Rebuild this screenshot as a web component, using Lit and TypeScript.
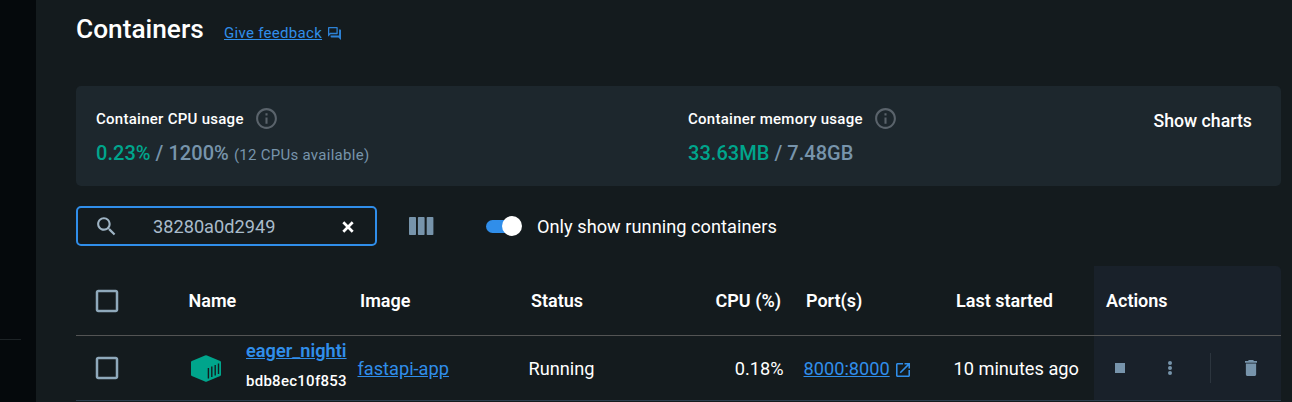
import { LitElement, html, css } from "lit";
import { customElement } from "lit/decorators.js";

const infoIcon = html`<svg class="info" viewBox="0 0 24 24" width="25" height="25"><path fill="#5a636b" d="M11 7h2v2h-2zm0 4h2v6h-2zm1-9C6.48 2 2 6.48 2 12s4.48 10 10 10 10-4.480 10-10S17.520 2 12 2zm0 18c-4.410 0-8-3.590-8-8s3.590-8 8-8 8 3.590 8 8-3.590 8-8 8z"/></svg>`;

const checkbox = html`<svg class="check" viewBox="0 0 24 24" width="30" height="30"><path fill="#8fa9bb" d="M19 5v14H5V5h14m0-2H5c-1.100 0-2 .9-2 2v14c0 1.100.9 2 2 2h14c1.100 0 2-.9 2-2V5c0-1.100-.9-2-2-2z"/></svg>`;

@customElement("app-root")
export class AppRoot extends LitElement {
  static styles = css`
    :host {
      display: flex;
      width: 1292px;
      height: 402px;
      overflow: hidden;
      background: #141b1e;
      color: #fff;
      font: 400 18.2px/24px Roboto, sans-serif;
    }
    * { box-sizing: border-box; }
    svg { display: block; flex: none; }
    a { color: #308eea; text-decoration: underline; }
    .side { width: 36px; flex: none; background: #05090c; padding-top: 339px; }
    .side-line { width: 21px; height: 1px; background: #1d2326; }
    .main { width: 1205px; margin-left: 40px; flex: none; }
    .head { height: 86px; display: flex; align-items: baseline; padding-top: 14px; }
    h1 { margin: 0; font-size: 26.25px; line-height: 31px; font-weight: 500; width: 148px; }
    .feedback { font-size: 15px; letter-spacing: 0.3px; line-height: 20px; }
    .chat { margin-left: 6px; align-self: flex-start; margin-top: 13px; opacity: 0.9; }
    .panel { height: 100px; border-radius: 5px; background: #1d272d; display: flex; padding: 0 20px; }
    .cpu { width: 592px; }
    .mem { width: 465.5px; }
    .label { display: flex; align-items: center; font-size: 15px; font-weight: 500; height: 25px; margin-top: 20px; letter-spacing: 0.27px; }
    .info { margin-left: 10.500px; }
    .value { font-size: 20px; font-weight: 500; margin-top: 10px; color: #7794ab; line-height: 24px; white-space: nowrap; letter-spacing: 0.04px; }
    .used { color: #00a58c; }
    .avail { font-size: 15px; font-weight: 400; letter-spacing: 0.28px; }
    .charts { font-weight: 500; font-size: 17.7px; margin-top: 23px; white-space: nowrap; }
    .tools { height: 40px; margin-top: 20px; display: flex; align-items: center; }
    .search { width: 301px; height: 40px; border: 2px solid #308eea; border-radius: 5px; display: flex; align-items: center; padding-left: 16px; color: #a9bccb; }
    .term { width: 189px; margin-left: 34px; padding-top: 1px; }
    .clear { margin-top: 1px; }
    .cols { margin-left: 32px; }
    .switch { margin-left: 52px; width: 36px; height: 20px; display: flex; align-items: center; }
    .track { width: 32px; height: 13px; border-radius: 7px; background: #308eea; display: flex; align-items: center; }
    .thumb { width: 20px; height: 20px; border-radius: 50%; background: #fff; margin-left: 16px; flex: none; }
    .only { margin-left: 15px; white-space: nowrap; padding-top: 1px; letter-spacing: 0.03px; }
    .table { margin-top: 20px; }
    .row { display: grid; white-space: nowrap; }
    .row > * { display: flex; align-items: center; min-width: 0; }
    .hrow { grid-template-columns: 112.500px 171.500px 171px 250px 25px 150px 138px 187px; height: 70px; border-bottom: 1px solid #535454; font-weight: 600; font-size: 18px; }
    .drow { grid-template-columns: 113px 168.500px 171px 255px 20px 150px 140.500px 187px; height: 65px; border-bottom: 1px solid #2b3d4c; }
    .check { margin-left: 16px; }
    .count { display: flex; justify-content: space-between; }
    .acts { background: #19212a; }
    .hrow .acts { border-top-right-radius: 5px; padding-left: 12px; }
    .box { margin-left: 2px; }
    .names { display: flex; flex-direction: column; margin-left: 25px; margin-bottom: 4px; width: 102px; flex: none; overflow: hidden; }
    .name { font-weight: 600; line-height: 30px; }
    .id { font-size: 15px; line-height: 30px; font-weight: 500; letter-spacing: 0.27px; }
    .cell { padding-top: 1px; }
    .ext { margin-left: 6px; margin-top: 3px; }
    .stop { width: 10px; height: 10px; background: #7794ab; margin-left: 21px; }
    .dots { margin-left: 43px; }
    .sep { width: 1px; height: 30px; background: #2c353e; margin-left: 38px; }
    .bin { margin-left: 34px; }
  `;

  render() {
    return html`
      <div class="side"><div class="side-line"></div></div>
      <div class="main">
        <div class="head">
          <h1>Containers</h1>
          <a class="feedback">Give feedback</a>
          <svg class="chat" viewBox="2 2 20 20" width="13" height="13"><path fill="#308eea" d="M15 4v7H5.170L4 12.170V4h11m1-2H3c-.55 0-1 .45-1 1v14l4-4h10c.55 0 1-.45 1-1V3c0-.55-.45-1-1-1zm5 4h-2v9H6v2c0 .55.45 1 1 1h11l4 4V7c0-.55-.45-1-1-1z"/></svg>
        </div>
        <div class="panel">
          <div class="cpu">
            <div class="label">Container CPU usage${infoIcon}</div>
            <div class="value"><span class="used">0.23%</span> / 1200% <span class="avail">(12 CPUs available)</span></div>
          </div>
          <div class="mem">
            <div class="label">Container memory usage${infoIcon}</div>
            <div class="value"><span class="used">33.63MB</span> / 7.48GB</div>
          </div>
          <div class="charts">Show charts</div>
        </div>
        <div class="tools">
          <div class="search">
            <svg viewBox="0 0 24 24" width="25" height="25"><path fill="#9fb4c4" d="M15.500 14h-.79l-.28-.27C15.410 12.590 16 11.110 16 9.500 16 5.910 13.090 3 9.500 3S3 5.910 3 9.500 5.910 16 9.500 16c1.610 0 3.090-.59 4.230-1.570l.27.28v.79l5 4.990L20.490 19l-4.990-5zm-6 0C7.010 14 5 11.990 5 9.500S7.010 5 9.500 5 14 7.010 14 9.500 11.990 14 9.500 14z"/></svg>
            <span class="term">38280a0d2949</span>
            <svg class="clear" viewBox="0 0 12 12" width="12" height="12"><path d="M1.300 1.300l9.400 9.400M10.700 1.300l-9.400 9.400" stroke="#fff" stroke-width="2.700"/></svg>
          </div>
          <svg class="cols" viewBox="0 0 25 18" width="25" height="18"><g fill="#7794ab"><rect width="7" height="18" x="0" rx=".8"/><rect width="6.700" height="18" x="8.900" rx=".8"/><rect width="6.700" height="18" x="17.700" rx=".8"/></g></svg>
          <div class="switch"><div class="track"><div class="thumb"></div></div></div>
          <span class="only">Only show running containers</span>
        </div>
        <div class="table">
          <div class="row hrow">
            <div>${checkbox}</div><div>Name</div><div>Image</div>
            <div class="count"><span>Status</span><span>CPU (%)</span></div>
            <div></div><div>Port(s)</div><div>Last started</div><div class="acts">Actions</div>
          </div>
          <div class="row drow">
            <div>${checkbox}</div>
            <div>
              <svg class="box" viewBox="0 0 30 27" width="30" height="27"><path fill="#00a58c" d="M14 .6Q15 .1 16 .6L29.200 6.100Q30 6.500 30 7.300V19.800Q30 20.600 29.200 21L16 26.400Q15 26.900 14 26.400L.8 21Q0 20.600 0 19.800V7.300Q0 6.500.8 6.100z"/><path d="M17.400 13v10.600M20.800 11.500v10.600M24.200 10v10.600M27.500 8.500v10.600" stroke="#141b1e" stroke-width="1.400"/></svg>
              <div class="names"><a class="name">eager_nighti</a><span class="id">bdb8ec10f853</span></div>
            </div>
            <div class="cell"><a>fastapi-app</a></div>
            <div class="cell count"><span>Running</span><span>0.18%</span></div>
            <div></div>
            <div class="cell"><a>8000:8000</a><svg class="ext" viewBox="3 3 18 18" width="14" height="14"><path fill="#308eea" d="M19 19H5V5h7V3H5c-1.110 0-2 .9-2 2v14c0 1.100.89 2 2 2h14c1.100 0 2-.9 2-2v-7h-2v7zM14 3v2h3.590l-9.830 9.830 1.410 1.410L19 6.410V10h2V3h-7z"/></svg></div>
            <div class="cell">10 minutes ago</div>
            <div class="acts">
              <span class="stop"></span>
              <svg class="dots" viewBox="0 0 4 14" width="4" height="14"><g fill="#7794ab"><circle cx="2" cy="2" r="2"/><circle cx="2" cy="7" r="2"/><circle cx="2" cy="12" r="2"/></g></svg>
              <span class="sep"></span>
              <svg class="bin" viewBox="5 3 14 18" width="12" height="16" preserveAspectRatio="none"><path fill="#7794ab" d="M6 19c0 1.100.9 2 2 2h8c1.100 0 2-.9 2-2V7H6v12zM19 4h-3.500l-1-1h-5l-1 1H5v2h14V4z"/></svg>
            </div>
          </div>
        </div>
      </div>
    `;
  }
}
